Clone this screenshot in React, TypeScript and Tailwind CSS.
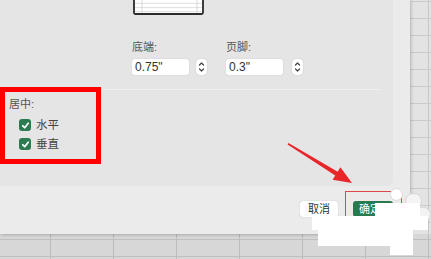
import React from 'react';

const font = { fontFamily: '"Liberation Sans", "Noto Sans CJK SC", sans-serif' };

const Stepper = () => (
  <div className="w-[11px] h-[16px] bg-white rounded-[4px] shadow-[0_0_1px_rgba(0,0,0,0.3)] flex items-center justify-center">
    <svg width="7" height="12" viewBox="0 0 7 12" fill="none" stroke="#444" strokeWidth="1.2" strokeLinecap="round" strokeLinejoin="round">
      <path d="M1.5 4 L3.5 2 L5.5 4" />
      <path d="M1.5 8 L3.5 10 L5.5 8" />
    </svg>
  </div>
);

const Check = ({ label }: { label: string }) => (
  <div className="flex items-center h-[12px] ml-[10px] gap-[5px]">
    <div className="w-[12px] h-[12px] rounded-[3px] bg-[#2b7a50] flex items-center justify-center">
      <svg width="9" height="9" viewBox="0 0 9 9" fill="none" stroke="white" strokeWidth="1.8" strokeLinecap="round" strokeLinejoin="round">
        <path d="M1.8 4.8 L3.7 6.7 L7.2 2.3" />
      </svg>
    </div>
    <span className="text-[11.5px] leading-[12px] text-[#444]">{label}</span>
  </div>
);

export default function App() {
  return (
    <div
      className="relative w-[431px] h-[259px] overflow-hidden bg-[#e3e3e3] [background-image:linear-gradient(#cacaca_1px,transparent_1px),linear-gradient(90deg,#c6c6c6_1px,transparent_1px)] [background-size:63px_17px] [background-position:50px_1px]"
      style={font}
    >
      {/* dialog */}
      <div className="w-[410px] h-[234px] bg-[#ebebeb] shadow-[1px_1px_3px_rgba(0,0,0,0.22)] flex flex-col">
        <div className="w-[393px] h-[186px] bg-[#e5e5e5] rounded-br-[6px] flex flex-col">
          {/* page preview */}
          <svg className="ml-[133px] shrink-0" width="71" height="16" viewBox="0 0 71 16">
            <rect x="1" y="-4" width="69" height="18" rx="1.5" fill="white" stroke="#2b2b2b" strokeWidth="1.8" />
            <line x1="2" y1="3.3" x2="69" y2="3.3" stroke="#d6d6d6" strokeWidth="0.8" />
            <line x1="2" y1="7.6" x2="69" y2="7.6" stroke="#d6d6d6" strokeWidth="0.8" />
            <line x1="2" y1="11.6" x2="69" y2="11.6" stroke="#d6d6d6" strokeWidth="0.8" />
            <line x1="9" y1="0" x2="9" y2="13" stroke="#cfcfcf" strokeWidth="0.8" />
            <line x1="64" y1="0" x2="64" y2="13" stroke="#cfcfcf" strokeWidth="0.8" />
          </svg>

          <div className="flex mt-[24px] text-[11px] leading-[14px] text-[#555]">
            <span className="ml-[132px] w-[94px]">底端:</span>
            <span>页脚:</span>
          </div>

          <div className="flex items-center mt-[5px] text-[12px] text-[#333]">
            <div className="ml-[132px] w-[57px] h-[16px] bg-white rounded-[2px] shadow-[0_0_1px_rgba(0,0,0,0.3)] pl-[3px] leading-[16px]">0.75"</div>
            <div className="ml-[7px]"><Stepper /></div>
            <div className="ml-[19px] w-[57px] h-[16px] bg-white rounded-[2px] shadow-[0_0_1px_rgba(0,0,0,0.3)] pl-[3px] leading-[16px]">0.3"</div>
            <div className="ml-[9px]"><Stepper /></div>
          </div>

          <div className="mt-[14px] w-[381px] h-px bg-[#efefef] shrink-0" />

          <div className="relative z-10 -mt-[3px] w-[101px] h-[77px] border-[5px] border-[#ff0000] pl-[4px] pt-[5px] flex flex-col">
            <span className="text-[11px] leading-[14px] text-[#555]">居中:</span>
            <div className="mt-[8px]"><Check label="水平" /></div>
            <div className="mt-[7px]"><Check label="垂直" /></div>
          </div>
        </div>

        <div className="flex pt-[15px] text-[11px]">
          <div className="ml-[300px] w-[38px] h-[16px] bg-white rounded-[3px] shadow-[0_0_1px_rgba(0,0,0,0.3)] text-[#333] leading-[16px] text-center">取消</div>
          <div className="ml-[15px] w-[40px] h-[16px] bg-[#277a4b] rounded-[3px] text-white leading-[16px] pl-[6px]">确定</div>
        </div>
      </div>

      {/* sheet below dialog is in its shadow */}
      <div className="w-[431px] h-[25px] bg-black/[0.05]" />

      {/* annotation: thin red box around OK */}
      <div className="absolute left-[345px] top-[191px] w-[57px] h-[36px] border-[1.5px] border-[#e0474c]" />

      {/* annotation: arrow */}
      <svg className="absolute left-0 top-0" width="431" height="259" viewBox="0 0 431 259">
        <polygon points="288.4,143 339,172.6 336.8,176.6 287.6,144.4" fill="#e8262a" />
        <polygon points="352,183 332.6,179.8 340.4,167.2" fill="#e8262a" />
      </svg>

      {/* watermark cover-up */}
      <div className="absolute left-[390px] top-[188px] w-[13px] h-[13px] rounded-full bg-white border border-[#dadada]" />
      <div className="absolute left-[405px] top-[193px] w-[17px] h-[16px] rounded-full bg-[#f4f4f4] border border-[#d6d6d6]" />
      <div className="absolute left-[415px] top-[207px] w-[16px] h-[15px] rounded-full bg-[#f4f4f4] border border-[#d6d6d6]" />
      <div className="absolute left-[375px] top-[203px] w-[45px] h-[13px] bg-white" />
      <div className="absolute left-[312px] top-[216px] w-[116px] h-[14px] bg-white" />
      <div className="absolute left-[318px] top-[230px] w-[72px] h-[16px] bg-white" />
      <div className="absolute left-[390px] top-[230px] w-[23px] h-[25px] bg-white" />
    </div>
  );
}
